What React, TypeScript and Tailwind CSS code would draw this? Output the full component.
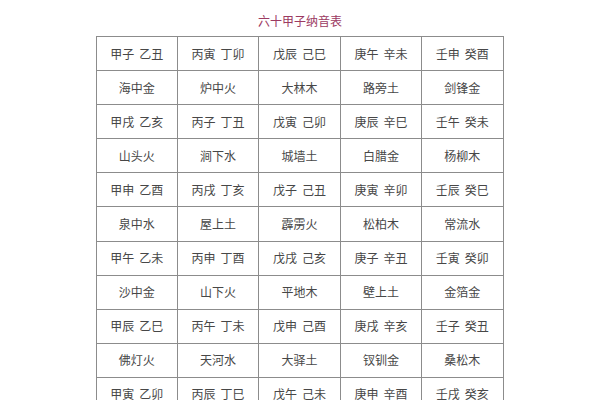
import React from "react";

const rows: string[][] = [
  ["甲子 乙丑", "丙寅 丁卯", "戊辰 己巳", "庚午 辛未", "壬申 癸酉"],
  ["海中金", "炉中火", "大林木", "路旁土", "剑锋金"],
  ["甲戌 乙亥", "丙子 丁丑", "戊寅 己卯", "庚辰 辛巳", "壬午 癸未"],
  ["山头火", "涧下水", "城墙土", "白腊金", "杨柳木"],
  ["甲申 乙酉", "丙戌 丁亥", "戊子 己丑", "庚寅 辛卯", "壬辰 癸巳"],
  ["泉中水", "屋上土", "霹雳火", "松柏木", "常流水"],
  ["甲午 乙未", "丙申 丁酉", "戊戌 己亥", "庚子 辛丑", "壬寅 癸卯"],
  ["沙中金", "山下火", "平地木", "壁上土", "金箔金"],
  ["甲辰 乙巳", "丙午 丁未", "戊申 己酉", "庚戌 辛亥", "壬子 癸丑"],
  ["佛灯火", "天河水", "大驿土", "钗钏金", "桑松木"],
  ["甲寅 乙卯", "丙辰 丁巳", "戊午 己未", "庚申 辛酉", "壬戌 癸亥"],
];

export default function App() {
  return (
    <div
      className="w-[600px] h-[400px] overflow-hidden bg-white flex flex-col items-center"
      style={{ fontFamily: '"Noto Sans CJK SC", "Noto Sans", sans-serif' }}
    >
      <div className="pt-[13px] text-[12px] leading-[16px] text-[#9c3a62]">六十甲子纳音表</div>
      <div className="mt-[7px] ml-[-1px] w-[408px] grid grid-cols-5 border-l border-t border-[#8c8c8c]">
        {rows.map((r, i) =>
          r.map((c, j) => (
            <div
              key={`${i}-${j}`}
              className="h-[34.1px] flex items-center justify-center gap-[5px] border-r border-b border-[#8c8c8c] text-[12px] text-[#474747]"
            >
              {c.split(" ").map((p, k) => (
                <span key={k}>{p}</span>
              ))}
            </div>
          ))
        )}
      </div>
    </div>
  );
}
